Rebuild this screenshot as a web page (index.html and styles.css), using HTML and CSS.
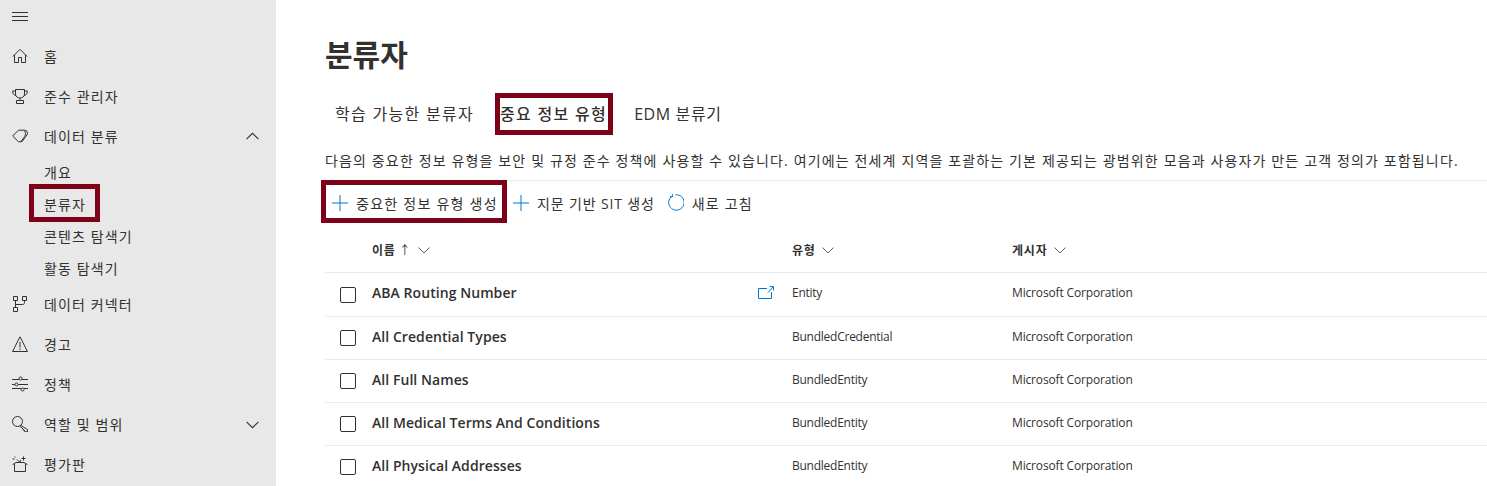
FILE: index.html
```html
<!DOCTYPE html>
<html lang="ko">
<head>
    <meta charset="UTF-8">
    <title>분류자</title>
    <link rel="stylesheet" href="styles.css">
</head>
<body>
    <nav class="sidebar">
        <div class="nav-top">
            <svg class="icon" viewBox="0 0 16 16"><path d="M0 4.500h16M0 8.500h16M0 12.500h16"/></svg>
        </div>
        <a class="nav-item">
            <svg class="icon" viewBox="0 0 16 16"><path d="M.8 8.500 8 1.300l7.200 7.200M2.500 7v7.500h4v-5h3v5h4V7"/></svg>
            <span>홈</span>
        </a>
        <a class="nav-item">
            <svg class="icon" viewBox="0 0 16 16"><path d="M3.500 1.500h9V6c0 2.500-2 4-4.500 4s-4.500-1.500-4.500-4zM3.500 3H.6c0 2.500 1 4 3.300 4.500M12.500 3h2.900c0 2.500-1 4-3.300 4.500M8 10v2.500M4.500 15.500v-3h7v3z"/></svg>
            <span>준수 관리자</span>
        </a>
        <a class="nav-item">
            <svg class="icon" viewBox="0 0 16 16"><path d="M.7 8 6.500 2.200h6a3 3 0 0 1 3 3v.8L10.200 13.500 6.500 13.800zM12 2.400c1.800 1.500 2 4.300.6 6.300L9 13.500"/></svg>
            <span>데이터 분류</span>
            <svg class="chevron" viewBox="0 0 12 12"><path d="M.5 8.500 6 3l5.500 5.500"/></svg>
        </a>
        <a class="nav-sub">개요</a>
        <a class="nav-sub"><span class="mark mark-nav"></span>분류자</a>
        <a class="nav-sub">콘텐츠 탐색기</a>
        <a class="nav-sub">활동 탐색기</a>
        <a class="nav-item">
            <svg class="icon" viewBox="0 0 16 16"><path d="M1.500.500h4v4h-4zM10.500.500h4v4h-4zM1.500 11.500h4v4h-4zM3.500 4.500v7M12.500 4.500v2c0 1-.5 2-2 2h-7"/></svg>
            <span>데이터 커넥터</span>
        </a>
        <a class="nav-item">
            <svg class="icon" viewBox="0 0 16 16"><path d="M8 .8.500 15.500h15zM8 6v5.500M8 12.500v1.500"/></svg>
            <span>경고</span>
        </a>
        <a class="nav-item">
            <svg class="icon" viewBox="0 0 16 16"><path d="M0 3.500h7M10 3.500h6M0 8.500h3M6 8.500h10M0 12.500h9M12 12.500h4"/><circle cx="8.500" cy="2.500" r="1.500"/><circle cx="4.500" cy="8.500" r="1.500"/><circle cx="10.500" cy="13.500" r="1.500"/></svg>
            <span>정책</span>
        </a>
        <a class="nav-item">
            <svg class="icon" viewBox="0 0 16 16"><circle cx="5.500" cy="5.500" r="5"/><path d="M9 9.500 15.500 13.500v2.300h-2.800v-1.500h-1.500V13L7.800 10.300"/></svg>
            <span>역할 및 범위</span>
            <svg class="chevron" viewBox="0 0 12 12"><path d="M.5 3.500 6 9l5.500-5.500"/></svg>
        </a>
        <a class="nav-item">
            <svg class="icon" viewBox="0 0 16 16"><path d="M2.500 8v7.500h11V8M.5 8.500 4 6.500h8l3.500 2M8 6.500 5 3.500M8 6.500 8.500 4M11.500 .5v4M9.500 2.500h4M.5 3h2M3 .5v1"/></svg>
            <span>평가판</span>
        </a>
    </nav>

    <main class="content">
        <h1 class="title">분류자</h1>

        <div class="tabs">
            <a class="tab">학습 가능한 분류자</a>
            <a class="tab tab-active"><span class="mark mark-tab"></span>중요 정보 유형</a>
            <a class="tab tab-last">EDM 분류기</a>
        </div>

        <p class="intro">다음의 중요한 정보 유형을 보안 및 규정 준수 정책에 사용할 수 있습니다. 여기에는 전세계 지역을 포괄하는 기본 제공되는 광범위한 모음과 사용자가 만든 고객 정의가 포함됩니다.</p>

        <div class="toolbar">
            <a class="action action-first">
                <span class="mark mark-action"></span>
                <svg class="action-icon" viewBox="0 0 16 16"><path d="M8 0v16M0 8h16"/></svg>
                중요한 정보 유형 생성
            </a>
            <a class="action action-sit">
                <svg class="action-icon" viewBox="0 0 16 16"><path d="M8 0v16M0 8h16"/></svg>
                지문 기반 SIT 생성
            </a>
            <a class="action action-refresh">
                <svg class="refresh-icon" viewBox="0 0 17 17"><path d="M5.500 1.800a7.700 7.700 0 1 0 3-1M5.500 .3v2.500H2.800"/></svg>
                새로 고침
            </a>
        </div>

        <div class="table">
            <div class="row row-head">
                <div class="cell-check"></div>
                <div class="cell-name">이름 <span class="sort">↑</span><svg class="head-chevron" viewBox="0 0 12 12"><path d="M.5 3.500 6 9l5.500-5.500"/></svg></div>
                <div class="cell-type">유형<svg class="head-chevron" viewBox="0 0 12 12"><path d="M.5 3.500 6 9l5.500-5.500"/></svg></div>
                <div class="cell-pub">게시자<svg class="head-chevron" viewBox="0 0 12 12"><path d="M.5 3.500 6 9l5.500-5.500"/></svg></div>
            </div>
            <div class="row row-tall">
                <div class="cell-check"><span class="checkbox"></span></div>
                <div class="cell-name">
                    <b>ABA Routing Number</b>
                    <svg class="open-icon" viewBox="0 0 16 13"><path d="M9 2.500H.5v10h13V6M10 6.500 15 1M11.500.6h4v4"/></svg>
                </div>
                <div class="cell-type">Entity</div>
                <div class="cell-pub">Microsoft Corporation</div>
            </div>
            <div class="row">
                <div class="cell-check"><span class="checkbox"></span></div>
                <div class="cell-name"><b>All Credential Types</b></div>
                <div class="cell-type">BundledCredential</div>
                <div class="cell-pub">Microsoft Corporation</div>
            </div>
            <div class="row">
                <div class="cell-check"><span class="checkbox"></span></div>
                <div class="cell-name"><b>All Full Names</b></div>
                <div class="cell-type">BundledEntity</div>
                <div class="cell-pub">Microsoft Corporation</div>
            </div>
            <div class="row">
                <div class="cell-check"><span class="checkbox"></span></div>
                <div class="cell-name"><b>All Medical Terms And Conditions</b></div>
                <div class="cell-type">BundledEntity</div>
                <div class="cell-pub">Microsoft Corporation</div>
            </div>
            <div class="row">
                <div class="cell-check"><span class="checkbox"></span></div>
                <div class="cell-name"><b>All Physical Addresses</b></div>
                <div class="cell-type">BundledEntity</div>
                <div class="cell-pub">Microsoft Corporation</div>
            </div>
        </div>
    </main>
</body>
</html>
```

FILE: styles.css
```css
html, body {
    margin: 0;
    padding: 0;
    height: 100%;
    overflow: hidden;
}
body {
    display: flex;
    background: white;
    color: #323130;
    font-family: "Open Sans", "Noto Sans CJK KR", sans-serif;
    font-size: 14px;
}
svg {
    fill: none;
    stroke: currentColor;
    stroke-width: 1;
}

/* red annotation boxes */
.mark {
    position: absolute;
    border: 5px solid #7f0019;
    box-sizing: border-box;
    pointer-events: none;
}
.mark-nav {
    left: 29px;
    top: -4px;
    width: 71px;
    height: 38px;
}
.mark-tab {
    left: -5px;
    top: -2px;
    width: 118px;
    height: 42px;
}
.mark-action {
    left: -4px;
    top: -1px;
    width: 186px;
    height: 43px;
}

/* sidebar */
.sidebar {
    width: 276px;
    flex-shrink: 0;
    height: 100%;
    background: #e8e8e8;
    letter-spacing: 1.1px;
}
.nav-top {
    height: 36px;
    display: flex;
    align-items: center;
    padding-left: 12px;
    padding-bottom: 4px;
    box-sizing: border-box;
}
.nav-item {
    height: 40px;
    display: flex;
    align-items: center;
    padding-left: 12px;
    padding-right: 17px;
}
.nav-item .icon {
    margin-right: 16px;
}
.icon {
    width: 16px;
    height: 16px;
    flex-shrink: 0;
}
.chevron {
    width: 13px;
    height: 13px;
    margin-left: auto;
}
.nav-sub {
    position: relative;
    height: 32px;
    display: flex;
    align-items: center;
    padding-left: 44px;
}

/* main area */
.content {
    flex: 1;
    min-width: 0;
    padding-left: 49px;
}
.title {
    margin: 0;
    padding-top: 32px;
    height: 64px;
    font-size: 30px;
    line-height: 46px;
    font-weight: 700;
}
.tabs {
    display: flex;
    height: 40px;
    margin-top: -1px;
}
.tab {
    position: relative;
    display: flex;
    align-items: center;
    box-sizing: border-box;
    height: 40px;
    margin: 0 10px;
    padding-bottom: 4px;
    font-size: 16px;
    letter-spacing: 1.3px;
    white-space: nowrap;
}
.tab-active {
    font-weight: 500;
    border-bottom: 2px solid #0078d4;
    padding-bottom: 2px;
    margin-left: 16px;
    margin-right: 17px;
}
.tab-last {
    letter-spacing: .6px;
}
.intro {
    margin: 0;
    padding-top: 16px;
    font-size: 14px;
    letter-spacing: 1.14px;
    line-height: 20px;
    height: 29px;
    white-space: nowrap;
}
.toolbar {
    display: flex;
    height: 43px;
    border-top: 1px solid #edebe9;
}
.action {
    position: relative;
    display: flex;
    align-items: center;
    white-space: nowrap;
    font-size: 14px;
    letter-spacing: 1.1px;
    padding-left: 7px;
    margin-right: 8px;
}
.action-icon {
    width: 16px;
    height: 16px;
    margin-right: 8px;
    color: #0078d4;
}
.refresh-icon {
    width: 17px;
    height: 17px;
    margin-right: 8px;
    color: #0078d4;
}
.action-first {
    width: 166px;
    flex-shrink: 0;
    letter-spacing: 1.25px;
}
.action-sit {
    letter-spacing: .85px;
}
.action-refresh {
    padding-left: 4px;
    letter-spacing: 1.2px;
}
.table {
    margin-top: 5px;
}
.row {
    display: flex;
    align-items: center;
    height: 43px;
    border-top: 1px solid #edebe9;
    box-sizing: border-box;
}
.row-tall {
    height: 44px;
}
.row-head {
    height: 43px;
    border-top: none;
    font-weight: 600;
    font-size: 12px;
}
.cell-check {
    width: 47px;
    padding-left: 15px;
    box-sizing: border-box;
    display: flex;
    flex-shrink: 0;
}
.checkbox {
    width: 16px;
    height: 16px;
    border: 1px solid #323130;
    border-radius: 2px;
    box-sizing: border-box;
}
.cell-name {
    width: 420px;
    flex-shrink: 0;
    display: flex;
    align-items: center;
    padding-bottom: 4px;
    box-sizing: border-box;
}
.cell-name b {
    font-weight: 600;
    font-size: 14px;
    letter-spacing: .06px;
}
.open-icon {
    width: 16px;
    height: 13px;
    margin-left: auto;
    margin-right: 18px;
    color: #0078d4;
}
.cell-type {
    width: 220px;
    flex-shrink: 0;
    font-size: 12px;
    letter-spacing: -.25px;
    display: flex;
    align-items: center;
    padding-bottom: 4px;
    box-sizing: border-box;
}
.cell-pub {
    font-size: 12px;
    letter-spacing: -.15px;
    display: flex;
    align-items: center;
    padding-bottom: 4px;
}
.row-head .cell-name, .row-head .cell-type, .row-head .cell-pub {
    padding-bottom: 2px;
    letter-spacing: .8px;
}
.sort {
    margin-left: 3px;
    font-weight: 400;
}
.head-chevron {
    width: 12px;
    height: 12px;
    margin-left: 6px;
    color: #605e5c;
}
```
